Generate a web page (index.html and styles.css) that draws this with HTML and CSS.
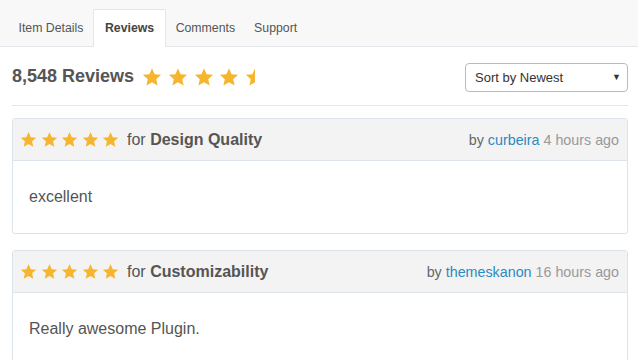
FILE: index.html
```html
<!DOCTYPE html>
<html lang="en">
<head>
    <meta charset="UTF-8">
    <meta name="viewport" content="width=device-width, initial-scale=1.0">
    <title>Reviews</title>
    <link rel="stylesheet" href="styles.css">
</head>
<body>

<svg width="0" height="0" style="position:absolute">
    <defs>
        <symbol id="star" viewBox="0 0 24 24">
            <path d="M12 1.5l3.1 7.2 7.8.7-5.9 5.2 1.8 7.7L12 18.2l-6.8 4.1 1.8-7.7-5.9-5.2 7.8-.7z"/>
        </symbol>
        <clipPath id="half">
            <rect x="12" y="0" width="12" height="24"/>
        </clipPath>
    </defs>
</svg>

<nav class="tabs">
    <a class="tab">Item Details</a>
    <a class="tab active">Reviews</a>
    <a class="tab">Comments</a>
    <a class="tab">Support</a>
</nav>

<main class="content">
    <div class="summary">
        <h2 class="total">8,548 Reviews</h2>
        <div class="stars big">
            <svg><use href="#star"/></svg>
            <svg><use href="#star"/></svg>
            <svg><use href="#star"/></svg>
            <svg><use href="#star"/></svg>
            <svg viewBox="0 0 24 24"><path clip-path="url(#half)" d="M12 1.5l3.1 7.2 7.8.7-5.9 5.2 1.8 7.7L12 18.2l-6.8 4.1 1.8-7.7-5.9-5.2 7.8-.7z" transform="scale(-1,1) translate(-24,0)"/></svg>
        </div>
        <div class="sort">
            <span>Sort by Newest</span>
            <span class="caret">&#9660;</span>
        </div>
    </div>

    <div class="review">
        <div class="review-head">
            <div class="stars small">
                <svg><use href="#star"/></svg>
                <svg><use href="#star"/></svg>
                <svg><use href="#star"/></svg>
                <svg><use href="#star"/></svg>
                <svg><use href="#star"/></svg>
            </div>
            <span class="topic">for <b>Design Quality</b></span>
            <span class="meta">by <a class="user">curbeira</a> <span class="time">4 hours ago</span></span>
        </div>
        <div class="review-body">excellent</div>
    </div>

    <div class="review">
        <div class="review-head">
            <div class="stars small">
                <svg><use href="#star"/></svg>
                <svg><use href="#star"/></svg>
                <svg><use href="#star"/></svg>
                <svg><use href="#star"/></svg>
                <svg><use href="#star"/></svg>
            </div>
            <span class="topic">for <b>Customizability</b></span>
            <span class="meta">by <a class="user">themeskanon</a> <span class="time">16 hours ago</span></span>
        </div>
        <div class="review-body">Really awesome Plugin.</div>
    </div>
</main>

</body>
</html>
```

FILE: styles.css
```css
/* Page basics */
body {
    margin: 0;
    background: #fff;
    color: #555;
    font-family: "Liberation Sans", Arial, sans-serif;
    overflow: hidden;
}

/* Tab bar */
.tabs {
    display: flex;
    align-items: flex-end;
    height: 47px;
    padding-left: 9px;
    background: #f8f8f8;
    border-bottom: 1px solid #e3e6ea;
    box-sizing: border-box;
}

.tab {
    display: flex;
    align-items: center;
    height: 38px;
    padding: 0 8.5px 2px;
    font-size: 12.3px;
    color: #555;
    border: 1px solid transparent;
    border-bottom: none;
    box-sizing: border-box;
    margin-bottom: -1px;
}

.tab.active {
    padding: 0 11px 2px;
    margin: 0 0 -1px;
    background: #fff;
    border-color: #e3e6ea;
    border-radius: 2px 2px 0 0;
    font-weight: bold;
    color: #444;
}

/* Main column */
.content {
    padding: 0 10px 0 12px;
}

.summary {
    display: flex;
    align-items: center;
    height: 58px;
    border-bottom: 1px solid #e3e6ea;
    margin-bottom: 12px;
}

.total {
    margin: 0 8px 0 0;
    font-size: 18px;
    font-weight: bold;
    color: #555;
}

.stars {
    display: flex;
    fill: #f5b52e;
}

.stars.big {
    gap: 5.75px;
    margin-top: 2px;
}

.stars.big svg {
    width: 20px;
    height: 20px;
}

.stars.small {
    gap: 3.5px;
    margin-right: 8px;
}

.stars.small svg {
    width: 17px;
    height: 17px;
}

/* Sort dropdown */
.sort {
    margin-left: auto;
    margin-top: 2px;
    display: flex;
    align-items: center;
    justify-content: space-between;
    width: 163px;
    height: 29px;
    padding: 0 6px 0 9px;
    border: 1px solid #bbb;
    border-radius: 4px;
    box-sizing: border-box;
    font-size: 13px;
    color: #333;
}

.caret {
    font-size: 9px;
    color: #333;
}

/* Review cards */
.review {
    border: 1px solid #dde3ea;
    border-radius: 3px;
    margin-bottom: 16px;
}

.review-head {
    display: flex;
    align-items: center;
    height: 41px;
    padding: 0 8px 0 7px;
    background: #f3f3f3;
    border-bottom: 1px solid #dde3ea;
}

.topic {
    font-size: 16px;
    color: #555;
}

.meta {
    margin-left: auto;
    font-size: 14.3px;
    color: #666;
}

.user {
    color: #2b8ac2;
}

.time {
    color: #999;
}

.review-body {
    height: 72px;
    display: flex;
    align-items: center;
    padding: 0 16px;
    font-size: 16px;
    color: #555;
}
```
